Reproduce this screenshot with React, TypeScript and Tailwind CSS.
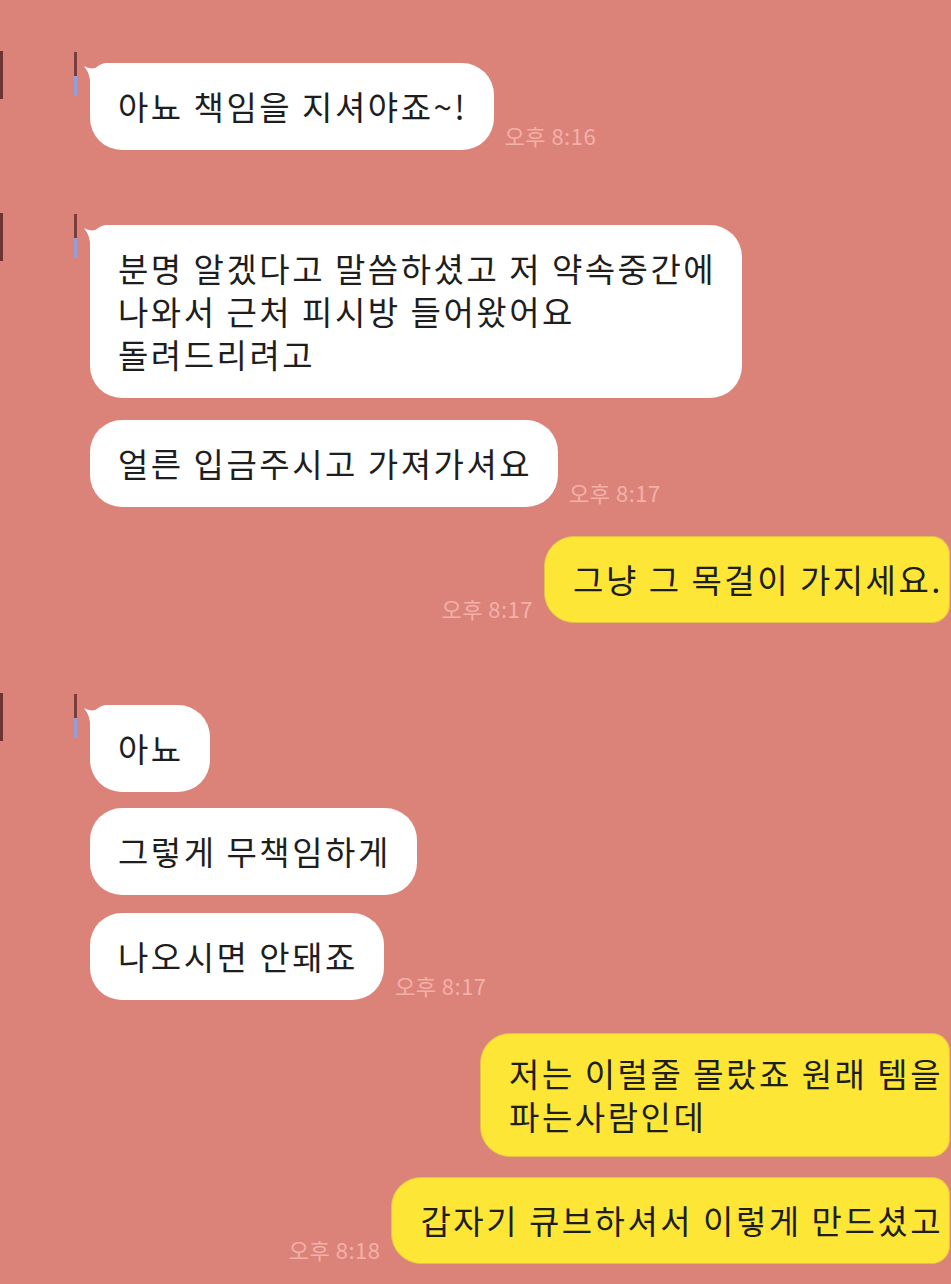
import React from 'react';

const FONT = { fontFamily: '"Noto Sans CJK KR", "Noto Sans", sans-serif' };

const Marks: React.FC = () => (
    <div className="w-[90px] shrink-0 self-start flex items-start justify-between">
        <div className="w-[3px] h-[48px] -mt-[12px] bg-[#6e3434]" />
        <div className="flex flex-col w-[3px] -mt-[11px] mr-[13px]">
            <div className="h-[24px] bg-[#7b3c3c]" />
            <div className="h-[20px] bg-[#8fa0dc]" />
        </div>
    </div>
);

const Tail: React.FC = () => (
    <svg className="absolute -left-[6px] top-0" width="26" height="22" viewBox="0 0 26 22">
        <path d="M0 3 Q 9 9 22 0 L 26 0 L 26 22 L 6 22 Q 7 12 0 3 Z" fill="#ffffff" />
    </svg>
);

const Time: React.FC<{ t: string }> = ({ t }) => (
    <span className="text-[22px] leading-[24px] tracking-[0.5px] text-[#f3b0a9] whitespace-nowrap pb-[3px]">{t}</span>
);

interface InProps {
    lines: string[];
    time?: string;
    first?: boolean;
    className?: string;
}

const Incoming: React.FC<InProps> = ({ lines, time, first, className }) => (
    <div className={`flex items-end ${className ?? ''}`}>
        {first ? <Marks /> : <div className="w-[90px] shrink-0" />}
        <div className="flex items-end gap-[11px]">
            <div className={`relative bg-white rounded-[32px] ${first ? 'rounded-tl-[18px]' : ''} pl-[28px] pr-[26px] py-[22px] text-[33px] leading-[43px] tracking-[2.5px] text-[#1e1e1e] whitespace-nowrap`}>
                {first && <Tail />}
                {lines.map((l, i) => (
                    <div key={i} className="relative">{l}</div>
                ))}
            </div>
            {time && <Time t={time} />}
        </div>
    </div>
);

const Outgoing: React.FC<{ lines: string[]; time?: string; className?: string; py?: string }> = ({ lines, time, className, py }) => (
    <div className={`flex items-end justify-end gap-[11px] pr-[1px] ${className ?? ''}`}>
        {time && <Time t={time} />}
        <div className={`bg-[#fde636] border border-[#e3c24a] rounded-[30px] rounded-r-[18px] pl-[28px] pr-[6px] ${py ?? 'py-[21px]'} text-[33px] leading-[43px] tracking-[2.5px] text-[#1e1e1e] whitespace-nowrap`}>
            {lines.map((l, i) => (
                <div key={i}>{l}</div>
            ))}
        </div>
    </div>
);

export default function App() {
    return (
        <div className="w-[951px] h-[1284px] overflow-hidden bg-[#dc8379] flex flex-col" style={FONT}>
            <Incoming first className="mt-[63px]" lines={['아뇨 책임을 지셔야죠~!']} time="오후 8:16" />
            <Incoming
                first
                className="mt-[75px]"
                lines={['분명 알겠다고 말씀하셨고 저 약속중간에', '나와서 근처 피시방 들어왔어요', '돌려드리려고']}
            />
            <Incoming className="mt-[22px]" lines={['얼른 입금주시고 가져가셔요']} time="오후 8:17" />
            <Outgoing className="mt-[29px]" lines={['그냥 그 목걸이 가지세요.']} time="오후 8:17" />
            <Incoming first className="mt-[82px]" lines={['아뇨']} />
            <Incoming className="mt-[16px]" lines={['그렇게 무책임하게']} />
            <Incoming className="mt-[18px]" lines={['나오시면 안돼죠']} time="오후 8:17" />
            <Outgoing className="mt-[33px]" py="py-[18px]" lines={['저는 이럴줄 몰랐죠 원래 템을', '파는사람인데']} />
            <Outgoing className="mt-[20px]" lines={['갑자기 큐브하셔서 이렇게 만드셨고']} time="오후 8:18" />
        </div>
    );
}
